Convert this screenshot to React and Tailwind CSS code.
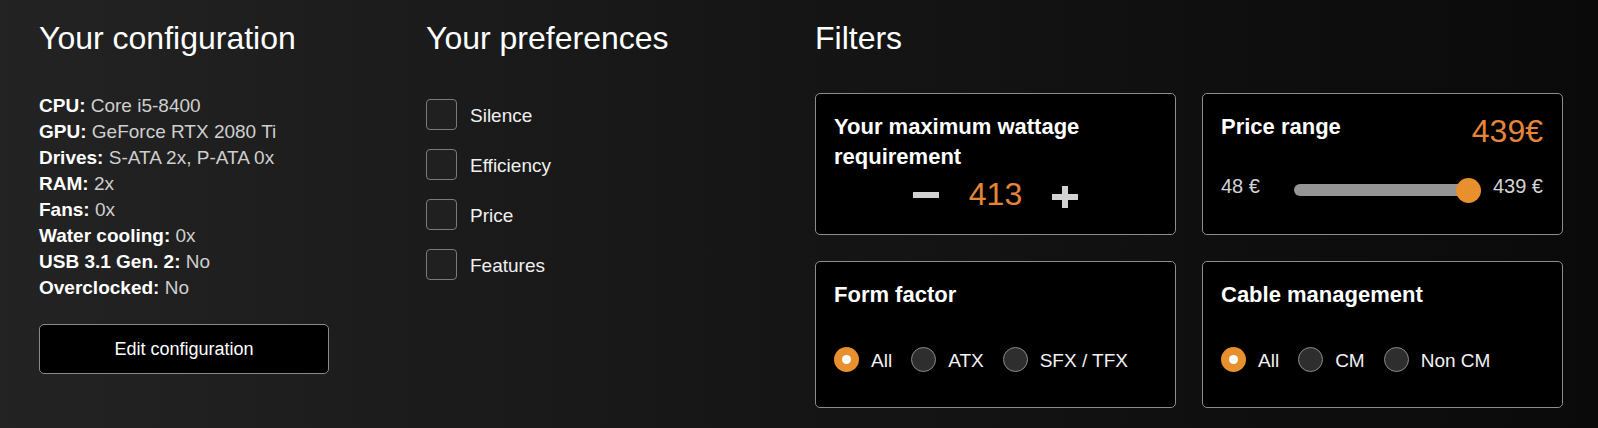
import React from "react";

const config = [
  ["CPU", "Core i5-8400"],
  ["GPU", "GeForce RTX 2080 Ti"],
  ["Drives", "S-ATA 2x, P-ATA 0x"],
  ["RAM", "2x"],
  ["Fans", "0x"],
  ["Water cooling", "0x"],
  ["USB 3.1 Gen. 2", "No"],
  ["Overclocked", "No"],
];

const prefs = ["Silence", "Efficiency", "Price", "Features"];

function Radio({ checked, label }) {
  return (
    <div className="flex items-center">
      {checked ? (
        <span className="flex h-[25px] w-[25px] items-center justify-center rounded-full bg-[#e8902e]">
          <span className="h-[9px] w-[9px] rounded-full bg-white" />
        </span>
      ) : (
        <span className="h-[25px] w-[25px] rounded-full border border-[#8a8a8a] bg-[#2e2e2e]" />
      )}
      <span className="ml-[12px] mt-[2px] text-[19px] leading-[25px] text-[#f2f2f2]">{label}</span>
    </div>
  );
}

function Card({ className = "", children }) {
  return (
    <div className={"rounded-[5px] border border-[#8c8c8c] bg-black px-[18px] pt-[18px] " + className}>
      {children}
    </div>
  );
}

function CardTitle({ children }) {
  return <div className="text-[22px] font-bold leading-[30px] text-white">{children}</div>;
}

export default function App() {
  return (
    <div className="flex h-[428px] w-full bg-linear-to-r from-[#232323] via-[#151515] to-[#0a0a0a] pl-[39px] pr-[35px] pt-[20px] font-['Liberation_Sans',Arial,sans-serif] text-white">
      {/* Configuration */}
      <div className="flex w-[387px] shrink-0 flex-col">
        <h2 className="text-[32px] leading-[36px] text-white">Your configuration</h2>
        <div className="mt-[37px] text-[19px] leading-[26px]">
          {config.map(([k, v]) => (
            <div key={k}>
              <span className="font-bold text-white">{k}:</span>{" "}
              <span className="text-[#cfcfcf]">{v}</span>
            </div>
          ))}
        </div>
        <button className="mt-[23px] h-[50px] w-[290px] rounded-[5px] border border-[#8a8a8a] bg-black text-[18px] text-white">
          Edit configuration
        </button>
      </div>

      {/* Preferences */}
      <div className="flex w-[389px] shrink-0 flex-col">
        <h2 className="text-[32px] leading-[36px] text-white">Your preferences</h2>
        <div className="mt-[43px] flex flex-col gap-[19px]">
          {prefs.map((p) => (
            <div key={p} className="flex h-[31px] items-center">
              <span className="h-[31px] w-[31px] rounded-[4px] border border-[#7a7a7a] bg-[#202020]" />
              <span className="ml-[13px] mt-[4px] text-[19px] text-[#f0f0f0]">{p}</span>
            </div>
          ))}
        </div>
      </div>

      {/* Filters */}
      <div className="flex flex-1 flex-col">
        <h2 className="text-[32px] leading-[36px] text-white">Filters</h2>
        <div className="mt-[37px] grid grid-cols-2 grid-rows-[142px_147px] gap-[26px]">
          <Card>
            <CardTitle>Your maximum wattage requirement</CardTitle>
            <div className="mt-[4px] flex h-[36px] items-center justify-center">
              <svg width="26" height="6" viewBox="0 0 26 6" className="mt-[2px]">
                <rect x="0" y="0" width="26" height="6" fill="#d2d2d2" />
              </svg>
              <span className="mx-[30px] text-[32px] leading-[36px] text-[#e5853a]">413</span>
              <svg width="26" height="22" viewBox="0 0 26 22" className="mt-[6px]">
                <rect x="0" y="8" width="26" height="6" fill="#d2d2d2" />
                <rect x="10" y="0" width="6" height="22" fill="#d2d2d2" />
              </svg>
            </div>
          </Card>

          <Card className="pr-[19px]">
            <div className="flex items-start justify-between">
              <CardTitle>Price range</CardTitle>
              <div className="mt-[1px] text-[32px] leading-[36px] text-[#e5853a]">439€</div>
            </div>
            <div className="mt-[29px] flex h-[25px] items-center">
              <span className="mb-[9px] text-[20px] leading-[24px] text-[#d4d4d4]">48 €</span>
              <div className="relative ml-[34px] mr-[12px] h-[25px] flex-1">
                <div className="absolute left-0 right-[12px] top-[6px] h-[12px] rounded-full bg-[#959595]" />
                <div className="absolute right-0 top-0 h-[25px] w-[25px] rounded-full bg-[#e8902e]" />
              </div>
              <span className="mb-[9px] text-[20px] leading-[24px] text-[#d4d4d4]">439 €</span>
            </div>
          </Card>

          <Card>
            <CardTitle>Form factor</CardTitle>
            <div className="mt-[36px] flex items-center gap-[19px]">
              <Radio checked label="All" />
              <Radio label="ATX" />
              <Radio label="SFX / TFX" />
            </div>
          </Card>

          <Card>
            <CardTitle>Cable management</CardTitle>
            <div className="mt-[36px] flex items-center gap-[19px]">
              <Radio checked label="All" />
              <Radio label="CM" />
              <Radio label="Non CM" />
            </div>
          </Card>
        </div>
      </div>
    </div>
  );
}
